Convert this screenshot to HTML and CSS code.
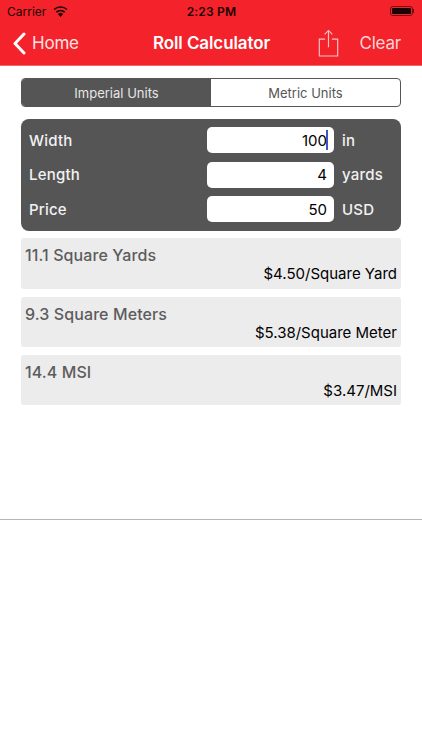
FILE: index.html
```html
<!DOCTYPE html>
<html lang="en">
<head>
  <meta charset="UTF-8">
  <meta name="viewport" content="width=device-width, initial-scale=1.0">
  <title>Roll Calculator</title>
  <link rel="stylesheet" href="styles.css">
</head>
<body>
  <header class="app-header">
    <div class="status-bar">
      <div class="status-left">
        <span>Carrier</span>
        <svg class="wifi" width="15" height="11" viewBox="0 0 15 11">
          <path d="M7.5 11 L4.9 7.9 A4 4 0 0 1 10.1 7.9 Z" fill="#1c0406"/>
          <path d="M3.3 6.2 A6.4 6.4 0 0 1 11.7 6.2" fill="none" stroke="#1c0406" stroke-width="1.6"/>
          <path d="M1 3.5 A9.6 9.6 0 0 1 14 3.5" fill="none" stroke="#1c0406" stroke-width="1.6"/>
        </svg>
      </div>
      <div class="status-time">2:23 PM</div>
      <div class="status-right">
        <div class="battery"><div class="battery-fill"></div></div>
        <div class="battery-tip"></div>
      </div>
    </div>
    <nav class="nav-bar">
      <div class="nav-back">
        <svg width="14" height="23" viewBox="0 0 14 23">
          <path d="M12 2 L3 11.5 L12 21" fill="none" stroke="#fff" stroke-width="3" stroke-linecap="round" stroke-linejoin="round"/>
        </svg>
        <span>Home</span>
      </div>
      <h1 class="nav-title">Roll Calculator</h1>
      <div class="nav-actions">
        <svg class="share" width="21" height="28" viewBox="0 0 21 29">
          <path d="M7 10.5 H1 V28 H20 V10.5 H14" fill="none" stroke="#f9c3c6" stroke-width="1.2"/>
          <path d="M10.5 19 V1.5 M6.5 5.5 L10.5 1.5 L14.5 5.5" fill="none" stroke="#f9c3c6" stroke-width="1.2"/>
        </svg>
        <span class="nav-clear">Clear</span>
      </div>
    </nav>
  </header>

  <main class="content">
    <div class="segments">
      <div class="segment active">Imperial Units</div>
      <div class="segment">Metric Units</div>
    </div>

    <section class="inputs">
      <div class="input-row">
        <span class="input-label">Width</span>
        <div class="field">100<span class="caret"></span></div>
        <span class="input-unit">in</span>
      </div>
      <div class="input-row">
        <span class="input-label">Length</span>
        <div class="field">4</div>
        <span class="input-unit">yards</span>
      </div>
      <div class="input-row">
        <span class="input-label">Price</span>
        <div class="field">50</div>
        <span class="input-unit">USD</span>
      </div>
    </section>

    <section class="result">
      <div class="result-amount">11.1 Square Yards</div>
      <div class="result-price">$4.50/Square Yard</div>
    </section>
    <section class="result">
      <div class="result-amount">9.3 Square Meters</div>
      <div class="result-price">$5.38/Square Meter</div>
    </section>
    <section class="result">
      <div class="result-amount">14.4 MSI</div>
      <div class="result-price">$3.47/MSI</div>
    </section>
  </main>

  <div class="divider"></div>
</body>
</html>
```

FILE: styles.css
```css
body {
  font-family: 'Inter', 'Liberation Sans', sans-serif;
  margin: 0;
  padding: 0;
  background-color: #fff;
  color: #000;
}

.app-header {
  background-color: #f4222a;
  height: 66px;
  box-sizing: border-box;
  border-bottom: 1px solid #f2656a;
}

.status-bar {
  height: 20px;
  padding: 1px 6px 0 7px;
  display: grid;
  grid-template-columns: 1fr auto 1fr;
  align-items: center;
  font-size: 12px;
  color: #1c0406;
}

.status-left {
  display: flex;
  align-items: center;
  gap: 7px;
}

.status-time {
  font-weight: 600;
  letter-spacing: 0.2px;
}

.status-right {
  display: flex;
  align-items: center;
  justify-content: flex-end;
  padding-right: 2px;
}

.battery {
  width: 23px;
  height: 10px;
  box-sizing: border-box;
  border: 1px solid #6d1014;
  border-radius: 3px;
  padding: 1px;
}

.battery-fill {
  height: 100%;
  background-color: #1c0406;
  border-radius: 1px;
}

.battery-tip {
  width: 1px;
  height: 4px;
  background-color: #6d1014;
}

.nav-bar {
  height: 44px;
  padding: 0 21px 0 12px;
  display: grid;
  grid-template-columns: 141px auto 1fr;
  align-items: center;
  color: #fff;
  font-size: 17px;
  letter-spacing: -0.2px;
}

.nav-back {
  display: flex;
  align-items: center;
  gap: 6px;
  color: #fbe3e4;
}

.nav-title {
  margin: 0;
  font-size: 17px;
  font-weight: 600;
  letter-spacing: -0.1px;
  color: #fff;
}

.nav-actions {
  display: flex;
  align-items: center;
  justify-content: flex-end;
  gap: 20px;
  color: #fbd5d7;
}

.content {
  padding: 12px 21px 0 21px;
}

.segments {
  display: flex;
  height: 29px;
  box-sizing: border-box;
  border: 1px solid #555;
  border-radius: 4px;
  overflow: hidden;
  font-size: 13px;
  color: #555;
}

.segment {
  flex: 1;
  display: flex;
  align-items: center;
  justify-content: center;
}

.segment.active {
  background-color: #555;
  color: #e6e6e6;
}

.inputs {
  margin-top: 12px;
  height: 112px;
  box-sizing: border-box;
  padding: 8px 19px 9px 8px;
  background-color: #555;
  border-radius: 8px;
  display: flex;
  flex-direction: column;
  justify-content: space-between;
}

.input-row {
  display: grid;
  grid-template-columns: 178px 127px auto;
  align-items: center;
  height: 26px;
  font-size: 15px;
  font-weight: 500;
  letter-spacing: 0.2px;
  color: #f2f2f2;
}

.input-unit {
  padding-left: 8px;
}

.field {
  height: 26px;
  box-sizing: border-box;
  padding-right: 7px;
  background-color: #fff;
  border-radius: 5px;
  display: flex;
  align-items: center;
  justify-content: flex-end;
  font-weight: 400;
  letter-spacing: 0;
  color: #000;
  position: relative;
}

.caret {
  position: absolute;
  right: 6px;
  top: 3px;
  width: 2px;
  height: 20px;
  background-color: #3d55c4;
}

.result {
  margin-top: 8px;
  padding: 7px 4px 0 4px;
  height: 50px;
  box-sizing: border-box;
  background-color: #ececec;
  border-radius: 3px;
}

.inputs + .result {
  margin-top: 7px;
  height: 51px;
}

.result-amount {
  font-size: 16px;
  font-weight: 500;
  letter-spacing: 0.1px;
  color: #5c5c5c;
  line-height: 20px;
}

.result-price {
  font-size: 15px;
  color: #000;
  text-align: right;
  line-height: 18px;
}

.divider {
  margin-top: 114px;
  height: 1px;
  background-color: #b5b5b5;
}
```
